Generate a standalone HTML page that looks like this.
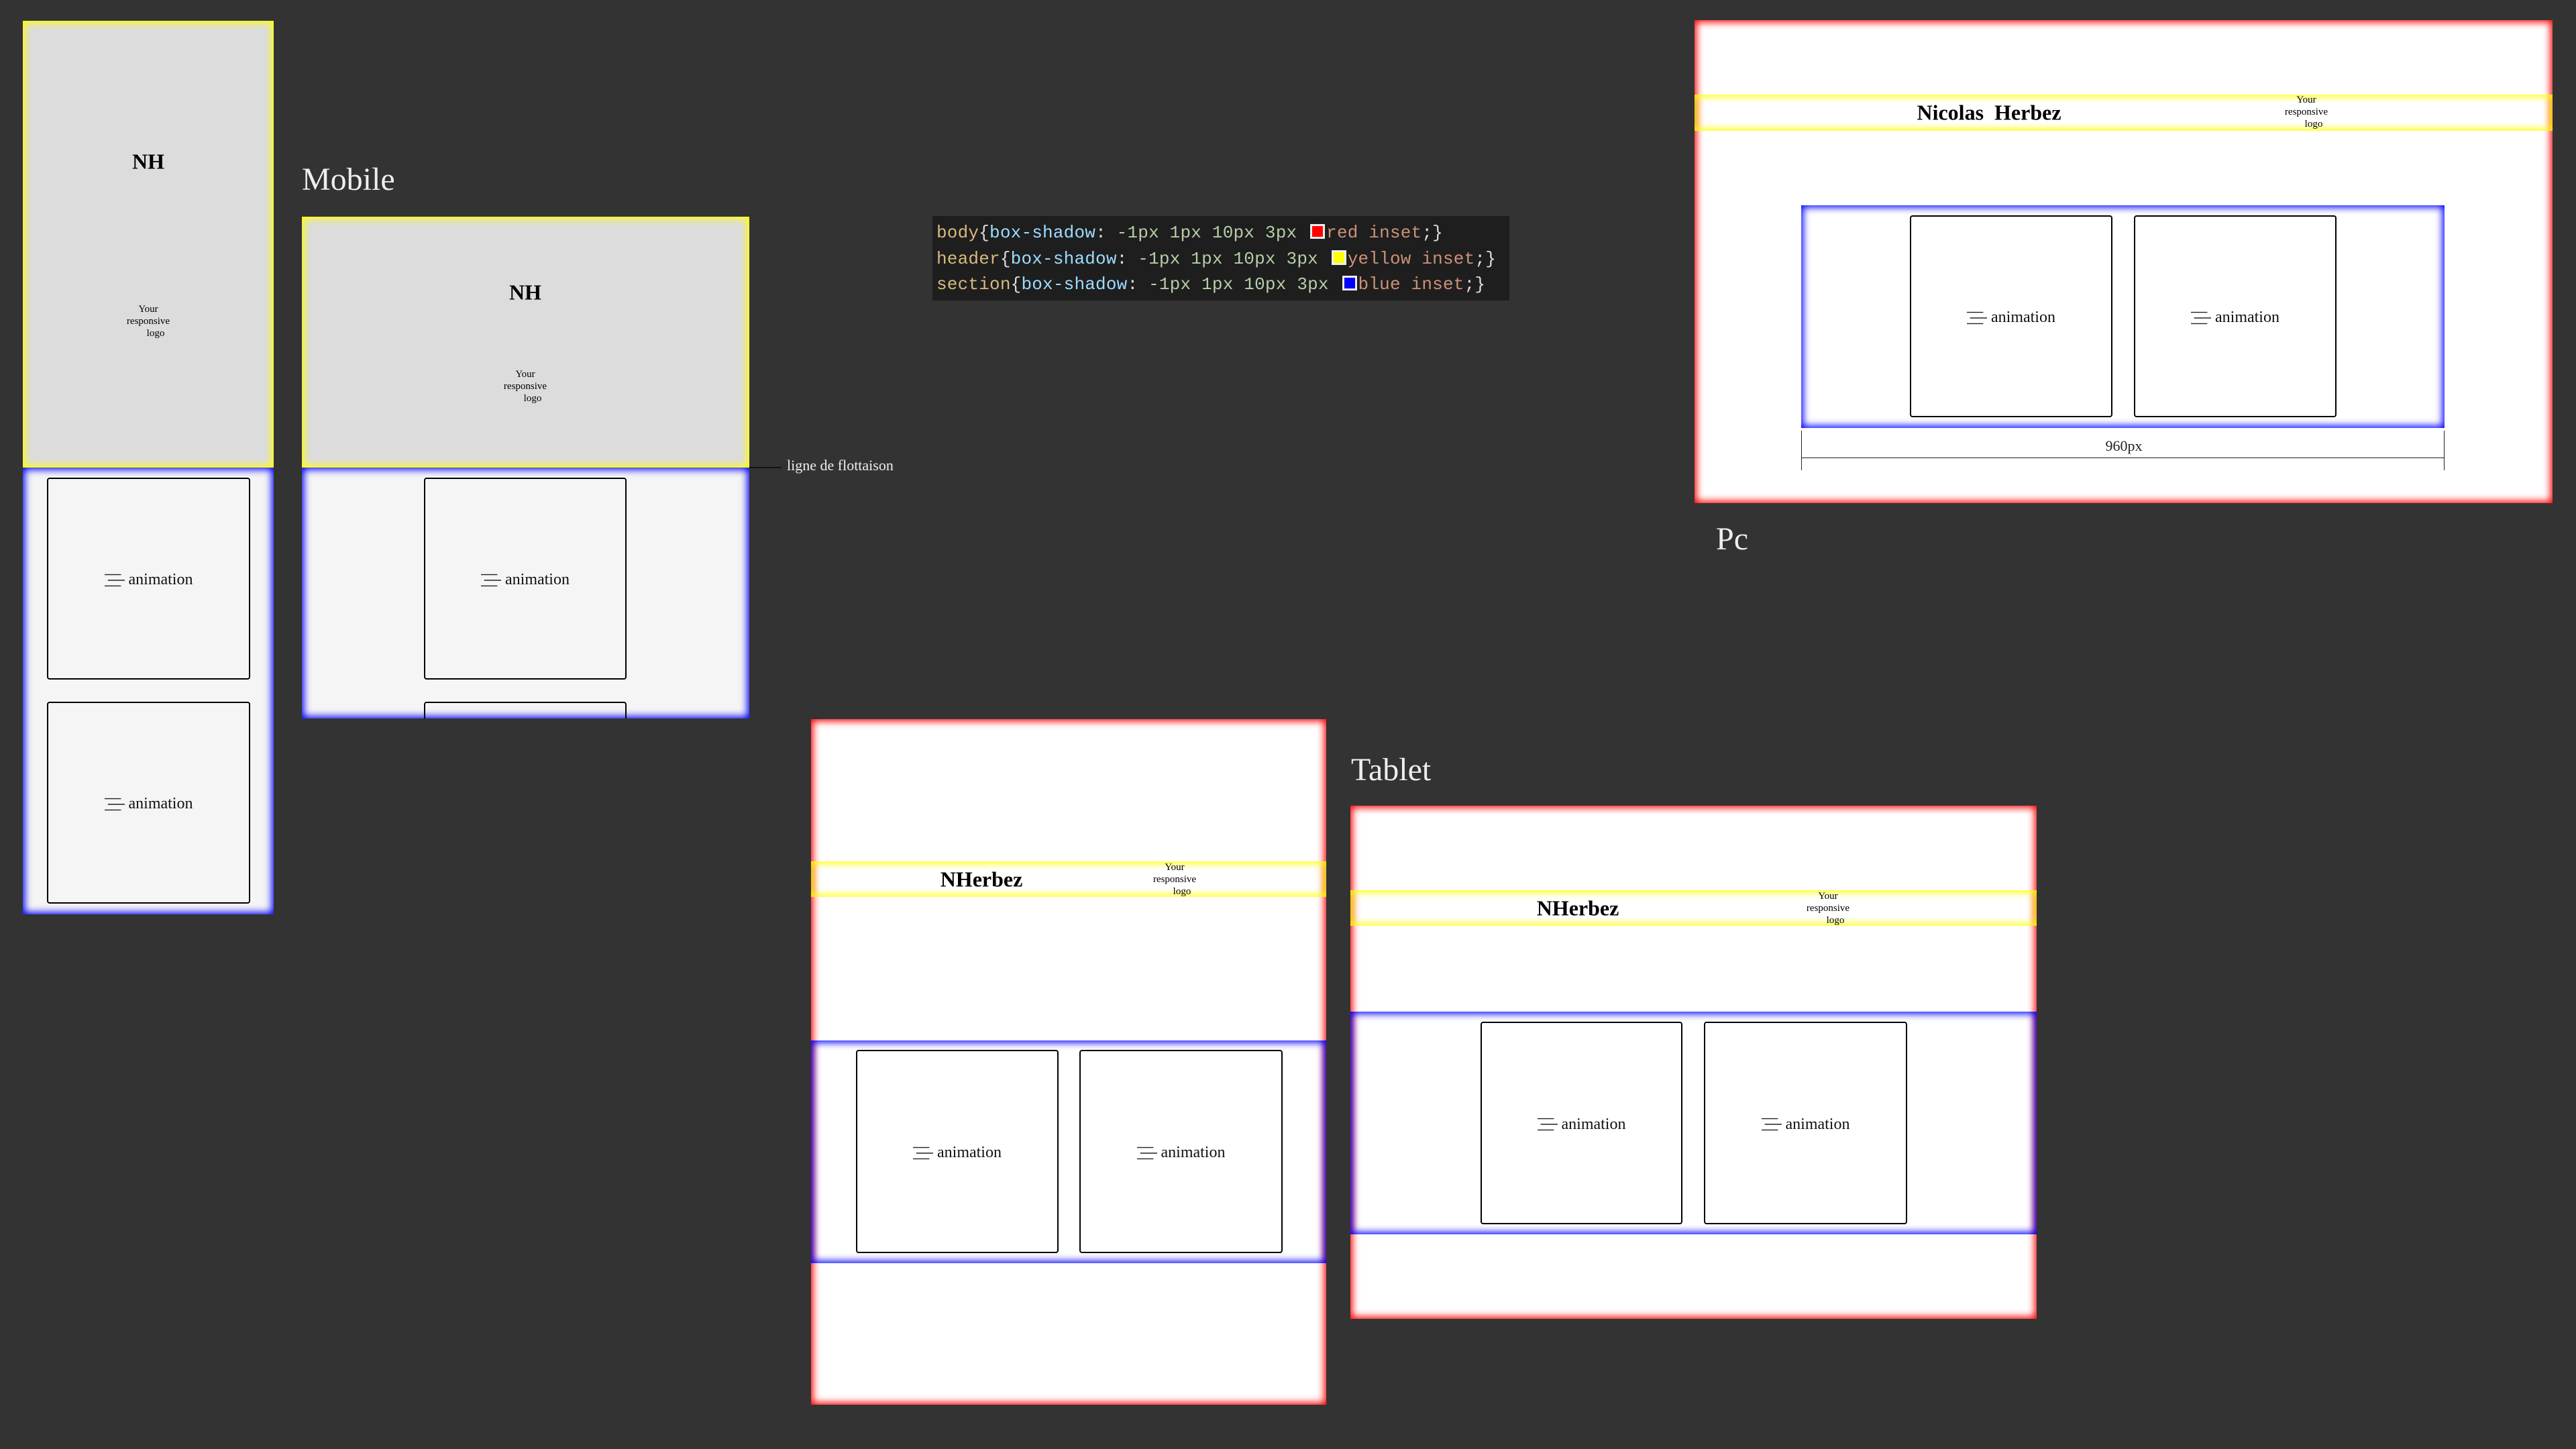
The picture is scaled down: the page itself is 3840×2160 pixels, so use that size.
<!DOCTYPE html>
<html><head><meta charset="utf-8"><style>
*{margin:0;padding:0;box-sizing:border-box}
body{width:3840px;height:2160px;background:#333;position:relative;overflow:hidden;font-family:"Liberation Serif",serif}
.a{position:absolute}
.red{background:#fff;box-shadow:inset 0 0 11px 3px red}
.yel{box-shadow:inset 0 0 11px 3px yellow}
.blu{box-shadow:inset 0 0 11px 3px blue}
.card{position:absolute;border:2px solid #000;border-radius:4px;display:flex;align-items:center;justify-content:center;font-size:24px;color:#111;padding-top:4px}
.card svg{margin-right:6px}
.nm{position:absolute;font-weight:bold;font-size:32px;color:#000;transform:translate(-50%,-50%);white-space:nowrap}
.logo{position:absolute;font-size:15px;line-height:18px;color:#000;width:80px;text-align:center}
.logo span{display:block}
.lbl{position:absolute;color:#eee;font-size:48px}
.code{position:absolute;left:1390px;top:322px;width:860px;height:126px;background:#1e1e1e;font-family:"Liberation Mono",monospace;font-size:26px;line-height:38.5px;padding:6px 0 0 6px;white-space:pre;letter-spacing:0.2px}
.s{color:#d7ba7d}.p{color:#9cdcfe}.n{color:#b5cea8}.v{color:#ce9178}.b{color:#ddd}
.sw{display:inline-block;width:22px;height:22px;border:3px solid #eee;vertical-align:-2px;margin:0 2px 0 4px}
</style></head><body>
<svg width="0" height="0" style="position:absolute"><defs><symbol id="ic" viewBox="0 0 32 20"><path d="M0 1H26M5 10H32M0 19H26" stroke="#222" stroke-width="1.5"/></symbol></defs></svg>

<!-- phone 1 -->
<div class="a yel" style="left:34px;top:31px;width:374px;height:666px;background:#dcdcdc"></div>
<div class="nm" style="left:221px;top:241px">NH</div>
<div class="logo" style="left:181px;top:452px"><span>Your</span><span>responsive</span><span style="padding-left:22px">logo</span></div>
<div class="a blu" style="left:34px;top:697px;width:374px;height:666px;background:#f5f5f5"></div>
<div class="card" style="left:70px;top:712px;width:303px;height:301px"><svg width="30" height="20"><use href="#ic"/></svg>animation</div>
<div class="card" style="left:70px;top:1046px;width:303px;height:301px"><svg width="30" height="20"><use href="#ic"/></svg>animation</div>

<!-- phone 2 -->
<div class="lbl" style="left:450px;top:240px">Mobile</div>
<div class="a yel" style="left:450px;top:323px;width:667px;height:374px;background:#dcdcdc"></div>
<div class="nm" style="left:783px;top:436px">NH</div>
<div class="logo" style="left:743px;top:549px"><span>Your</span><span>responsive</span><span style="padding-left:22px">logo</span></div>
<div class="a blu" style="left:450px;top:697px;width:667px;height:374px;background:#f5f5f5;overflow:hidden">
<div class="card" style="left:182px;top:15px;width:302px;height:301px"><svg width="30" height="20"><use href="#ic"/></svg>animation</div>
<div class="card" style="left:182px;top:349px;width:302px;height:301px"></div>
</div>
<div class="a" style="left:1117px;top:696px;width:48px;height:2px;background:#111"></div>
<div class="a" style="left:1173px;top:681px;color:#eee;font-size:22px">ligne de flottaison</div>

<!-- code -->
<div class="code"><span class="s">body</span><span class="b">{</span><span class="p">box-shadow</span><span class="b">: </span><span class="n">-1px 1px 10px 3px</span> <span class="sw" style="background:red"></span><span class="v">red inset</span><span class="b">;}</span>
<span class="s">header</span><span class="b">{</span><span class="p">box-shadow</span><span class="b">: </span><span class="n">-1px 1px 10px 3px</span> <span class="sw" style="background:yellow"></span><span class="v">yellow inset</span><span class="b">;}</span>
<span class="s">section</span><span class="b">{</span><span class="p">box-shadow</span><span class="b">: </span><span class="n">-1px 1px 10px 3px</span> <span class="sw" style="background:blue"></span><span class="v">blue inset</span><span class="b">;}</span></div>

<!-- PC -->
<div class="a red" style="left:2526px;top:30px;width:1279px;height:720px"></div>
<div class="a yel" style="left:2526px;top:141px;width:1279px;height:54px"></div>
<div class="nm" style="left:2965px;top:168px">Nicolas&nbsp; Herbez</div>
<div class="logo" style="left:3398px;top:140px"><span>Your</span><span>responsive</span><span style="padding-left:22px">logo</span></div>
<div class="a blu" style="left:2685px;top:306px;width:959px;height:332px;background:#fff"></div>
<div class="card" style="left:2847px;top:321px;width:302px;height:301px"><svg width="30" height="20"><use href="#ic"/></svg>animation</div>
<div class="card" style="left:3181px;top:321px;width:302px;height:301px"><svg width="30" height="20"><use href="#ic"/></svg>animation</div>
<div class="a" style="left:2685px;top:642px;width:1px;height:59px;background:#222"></div>
<div class="a" style="left:3643px;top:642px;width:1px;height:59px;background:#222"></div>
<div class="a" style="left:2685px;top:682px;width:959px;height:1px;background:#222"></div>
<div class="a" style="left:3166px;top:652px;transform:translateX(-50%);font-size:22px;color:#222">960px</div>
<div class="lbl" style="left:2558px;top:776px">Pc</div>

<!-- portrait tablet -->
<div class="a red" style="left:1209px;top:1072px;width:768px;height:1022px"></div>
<div class="a yel" style="left:1209px;top:1284px;width:768px;height:53px"></div>
<div class="nm" style="left:1463px;top:1311px">NHerbez</div>
<div class="logo" style="left:1711px;top:1284px"><span>Your</span><span>responsive</span><span style="padding-left:22px">logo</span></div>
<div class="a blu" style="left:1209px;top:1551px;width:768px;height:332px"></div>
<div class="card" style="left:1276px;top:1565px;width:302px;height:303px"><svg width="30" height="20"><use href="#ic"/></svg>animation</div>
<div class="card" style="left:1609px;top:1565px;width:303px;height:303px"><svg width="30" height="20"><use href="#ic"/></svg>animation</div>

<!-- tablet -->
<div class="lbl" style="left:2014px;top:1120px">Tablet</div>
<div class="a red" style="left:2013px;top:1201px;width:1023px;height:765px"></div>
<div class="a yel" style="left:2013px;top:1327px;width:1023px;height:53px"></div>
<div class="nm" style="left:2352px;top:1354px">NHerbez</div>
<div class="logo" style="left:2685px;top:1327px"><span>Your</span><span>responsive</span><span style="padding-left:22px">logo</span></div>
<div class="a blu" style="left:2013px;top:1508px;width:1023px;height:332px"></div>
<div class="card" style="left:2207px;top:1523px;width:301px;height:302px"><svg width="30" height="20"><use href="#ic"/></svg>animation</div>
<div class="card" style="left:2540px;top:1523px;width:303px;height:302px"><svg width="30" height="20"><use href="#ic"/></svg>animation</div>
</body></html>
